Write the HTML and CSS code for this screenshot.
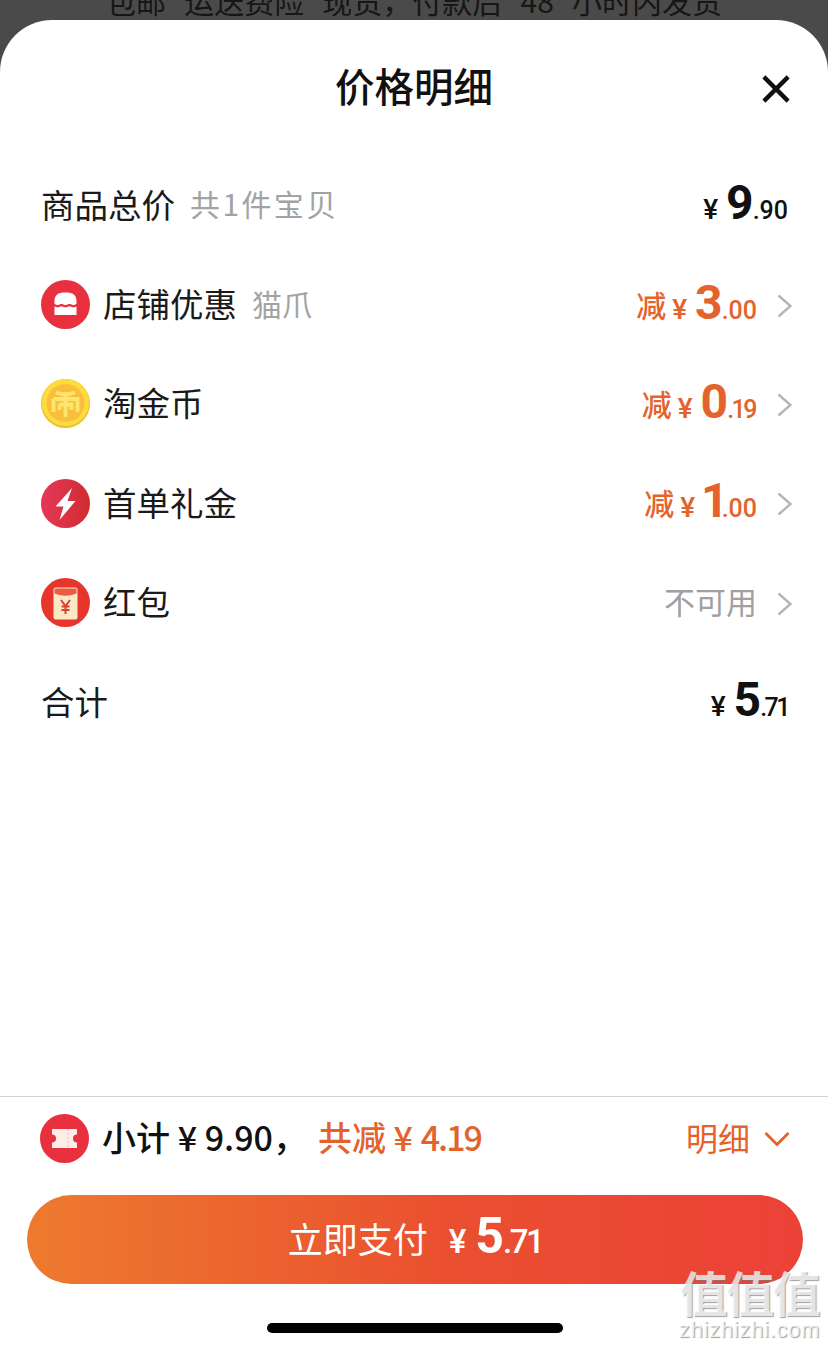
FILE: index.html
```html
<!DOCTYPE html>
<html lang="zh-CN">
<head>
    <meta charset="UTF-8">
    <meta name="viewport" content="width=device-width, initial-scale=1.0">
    <title>价格明细</title>
    <link rel="stylesheet" href="styles.css">
</head>
<body>
    <div class="behind-text">包邮 运送费险 现货，付款后 48 小时内发货</div>

    <div class="sheet">
        <div class="sheet-header">
            <h1>价格明细</h1>
            <svg class="close-icon" viewBox="0 0 30 30">
                <path d="M2 2 L28 28 M28 2 L2 28" stroke="#111" stroke-width="4.6" fill="none"/>
            </svg>
        </div>

        <!-- Price rows -->
        <div class="row row-plain">
            <span class="label">商品总价</span>
            <span class="sub">共1件宝贝</span>
            <div class="price">
                <span class="yen">¥</span><span class="big">9</span><span class="small">.90</span>
            </div>
        </div>

        <div class="row">
            <svg class="row-icon" viewBox="0 0 49 49">
                <circle cx="24.5" cy="24.5" r="24.5" fill="#e8303f"/>
                <path d="M13.5 21 C13.5 15 17 12.5 24.5 12.5 C32 12.5 35.5 15 35.5 21 L35.5 24 L32.5 25.2 L28.5 23.8 L24.5 25.2 L20.5 23.8 L16.5 25.2 L13.5 24 Z" fill="#fff"/>
                <path d="M13.5 26.5 L16.5 27.6 L20.5 26.2 L24.5 27.6 L28.5 26.2 L32.5 27.6 L35.5 26.5 L35.5 35 L13.5 35 Z" fill="#fff"/>
            </svg>
            <span class="label">店铺优惠</span>
            <span class="sub">猫爪</span>
            <div class="price orange">
                <span class="minus">减</span><span class="yen">¥</span><span class="big">3</span><span class="small">.00</span>
            </div>
            <svg class="chevron" viewBox="0 0 15 24"><path d="M1.5 1.5 L13.5 12 L1.5 22.5" /></svg>
        </div>

        <div class="row">
            <svg class="row-icon" viewBox="0 0 49 49">
                <circle cx="24.5" cy="24.5" r="24.5" fill="#edc02e"/>
                <circle cx="24.5" cy="23.5" r="23.5" fill="#fcdc3e"/>
                <circle cx="24.5" cy="24" r="19" fill="#f9bf3c"/>
                <path d="M15 13.5 Q24.5 17 34 13.5 M12.5 20 H36.5 V33 M12.5 20 V33 M18.5 25.5 H30.5 V31 M18.5 25.5 V31 M24.5 15 V38" stroke="#fde66e" stroke-width="3.8" fill="none"/>
            </svg>
            <span class="label">淘金币</span>
            <div class="price orange">
                <span class="minus">减</span><span class="yen">¥</span><span class="big">0</span><span class="small tight">.19</span>
            </div>
            <svg class="chevron" viewBox="0 0 15 24"><path d="M1.5 1.5 L13.5 12 L1.5 22.5" /></svg>
        </div>

        <div class="row">
            <svg class="row-icon" viewBox="0 0 49 49">
                <defs>
                    <linearGradient id="boltBg" x1="0" y1="0" x2="1" y2="0">
                        <stop offset="0" stop-color="#e5385a"/>
                        <stop offset="1" stop-color="#cf2c30"/>
                    </linearGradient>
                </defs>
                <circle cx="24.5" cy="24.5" r="24.5" fill="url(#boltBg)"/>
                <path d="M31 9 L14.5 27.5 L22.5 27.5 L18.5 41 L34.5 22 L26.5 22 Z" fill="#fff"/>
            </svg>
            <span class="label">首单礼金</span>
            <div class="price orange">
                <span class="minus">减</span><span class="yen">¥</span><span class="big one">1</span><span class="small">.00</span>
            </div>
            <svg class="chevron" viewBox="0 0 15 24"><path d="M1.5 1.5 L13.5 12 L1.5 22.5" /></svg>
        </div>

        <div class="row">
            <svg class="row-icon" viewBox="0 0 49 49">
                <circle cx="24.5" cy="24.5" r="24.5" fill="#e7352b"/>
                <rect x="12.5" y="9.5" width="24" height="32" rx="2" fill="#fbe9c6"/>
                <path d="M13.5 10.5 H35.5 V15.5 Q24.5 20 13.5 15.5 Z" fill="#ee5b45"/>
                <path d="M20 22 L24.5 28 L29 22 M24.5 28 V36 M20.5 28.5 H28.5 M20.5 32 H28.5" stroke="#d8402c" stroke-width="2" fill="none"/>
            </svg>
            <span class="label">红包</span>
            <div class="price muted">不可用</div>
            <svg class="chevron" viewBox="0 0 15 24"><path d="M1.5 1.5 L13.5 12 L1.5 22.5" /></svg>
        </div>

        <div class="row row-plain">
            <span class="label">合计</span>
            <div class="price">
                <span class="yen">¥</span><span class="big">5</span><span class="small tight">.71</span>
            </div>
        </div>

        <!-- Footer -->
        <div class="footer">
            <div class="summary">
                <svg class="summary-icon" viewBox="0 0 49 49">
                    <circle cx="24.5" cy="24.5" r="24.5" fill="#e8303f"/>
                    <path d="M12 15 H37 V20.5 A4 4 0 0 0 37 28.5 V34 H12 V28.5 A4 4 0 0 0 12 20.5 Z" fill="#fbeee8"/>
                    <path d="M28 15 V34" stroke="#f3c9c2" stroke-width="1.5" stroke-dasharray="2 2"/>
                </svg>
                <span class="subtotal">小计 ¥ 9.90，</span>
                <span class="discount">共减 ¥ <span class="tight-num">4.19</span></span>
                <span class="detail-link">明细</span>
                <svg class="chevron-down" viewBox="0 0 26 16"><path d="M1.5 2 L13 13.5 L24.5 2" /></svg>
            </div>
            <div class="pay-btn">
                <span class="pay-text">立即支付</span>
                <span class="yen">¥</span><span class="big">5</span><span class="small tight">.71</span>
            </div>
            <div class="home-bar"></div>
        </div>

        <div class="watermark">
            <div class="mark-zh">值值值</div>
            <div class="mark-en">zhizhizhi.com</div>
        </div>
    </div>
</body>
</html>
```

FILE: styles.css
```css
* {
    box-sizing: border-box;
}

body {
    margin: 0;
    height: 1349px;
    overflow: hidden;
    background-color: #4a4a4a;
    font-family: "Noto Sans CJK SC", "Noto Sans", sans-serif;
    color: #111;
}

.behind-text {
    height: 20px;
    line-height: 0;
    text-align: center;
    font-size: 30px;
    word-spacing: 11.5px;
    color: #161616;
    overflow: hidden;
    white-space: nowrap;
}

.sheet {
    position: relative;
    height: 1329px;
    background-color: #fff;
    border-radius: 52px 52px 0 0;
    display: flex;
    flex-direction: column;
}

.sheet-header {
    position: relative;
    height: 135.5px;
    display: flex;
    justify-content: center;
    padding-top: 37px;
}

h1 {
    margin: 0;
    font-size: 39.5px;
    line-height: 56px;
    font-weight: 500;
    color: #111;
}

.close-icon {
    position: absolute;
    top: 55px;
    right: 38px;
    width: 28px;
    height: 28px;
}

.row {
    height: 99.4px;
    display: flex;
    align-items: center;
    padding: 0 36px 0 41px;
}

.row-plain {
    padding-right: 40px;
}

.row-icon {
    width: 49px;
    height: 49px;
    margin-right: 13px;
    flex-shrink: 0;
}

.label {
    font-size: 33.5px;
    color: #1a1a1a;
    margin-bottom: 4px;
}

.sub {
    font-size: 30px;
    color: #a3a3a3;
    margin-left: 15px;
    margin-bottom: 4px;
}

.row-plain .sub {
    letter-spacing: 2.4px;
}

.price {
    margin-left: auto;
    margin-bottom: 4px;
    display: flex;
    align-items: baseline;
    font-family: Roboto, "Noto Sans CJK SC", sans-serif;
    font-weight: 500;
}

.orange {
    color: #e4632c;
}

.muted {
    font-family: "Noto Sans CJK SC", sans-serif;
    font-weight: 400;
    font-size: 31px;
    color: #a0a0a0;
}

.minus {
    font-family: "Noto Sans CJK SC", sans-serif;
    font-size: 30px;
    font-weight: 500;
    margin-right: 6px;
    transform: translateY(-2px);
}

.yen {
    font-size: 28px;
    margin-right: 8px;
}

.big {
    font-size: 48px;
    line-height: 60px;
    font-weight: 700;
    letter-spacing: -1px;
}

.big.one {
    margin-left: -2px;
    letter-spacing: -7px;
}

.small {
    font-size: 25px;
}

.tight {
    letter-spacing: -2.5px;
}

.orange .tight {
    margin-right: 2px;
}

.chevron {
    width: 15px;
    height: 24px;
    margin: 2px 0 0 20px;
    fill: none;
    stroke: #b5b5b5;
    stroke-width: 2.4;
}

.footer {
    margin-top: auto;
    border-top: 1.5px solid #d4d4d4;
    padding: 0 25px 16px 27px;
}

.summary {
    height: 83px;
    display: flex;
    align-items: center;
    padding: 0 13px 0 13px;
}

.summary-icon {
    width: 49px;
    height: 49px;
    margin-right: 13px;
}

.subtotal {
    font-size: 34px;
    font-weight: 500;
    color: #111;
    margin-bottom: 4px;
}

.discount {
    font-size: 34px;
    font-weight: 500;
    color: #e4632c;
    margin-left: 11px;
    margin-bottom: 4px;
}

.tight-num {
    letter-spacing: -2px;
}

.detail-link {
    margin-left: auto;
    margin-bottom: 4px;
    font-size: 32px;
    color: #e4632c;
}

.chevron-down {
    width: 26px;
    height: 16px;
    margin-left: 14px;
    fill: none;
    stroke: #e4632c;
    stroke-width: 2.8;
}

.pay-btn {
    margin-top: 15px;
    height: 89px;
    border-radius: 45px;
    background: linear-gradient(90deg, #ee7a2e, #ea4f30 55%, #ec4138);
    color: #fff;
    display: flex;
    align-items: baseline;
    justify-content: center;
    line-height: 83px;
    font-family: Roboto, "Noto Sans CJK SC", sans-serif;
    font-weight: 500;
}

.pay-text {
    font-family: "Noto Sans CJK SC", sans-serif;
    font-size: 35px;
    font-weight: 400;
    margin-right: 21px;
}

.pay-btn .yen {
    font-size: 33px;
    margin-right: 9px;
}

.pay-btn .big {
    font-size: 50px;
    line-height: 83px;
}

.pay-btn .small {
    font-size: 33px;
}

.home-bar {
    width: 296px;
    height: 10px;
    margin: 39px auto 0;
    border-radius: 5px;
    background-color: #000;
}

.watermark {
    position: absolute;
    right: 8px;
    bottom: 8px;
    text-align: center;
    color: rgba(255, 255, 255, 0.72);
    text-shadow: 1px 1px 1px rgba(120, 120, 120, 0.7);
    line-height: 1;
}

.mark-zh {
    font-size: 48px;
    letter-spacing: -1.5px;
    font-weight: 700;
}

.mark-en {
    font-family: "Liberation Sans", sans-serif;
    font-size: 22px;
    margin-top: 4px;
    letter-spacing: 0.7px;
}
```
